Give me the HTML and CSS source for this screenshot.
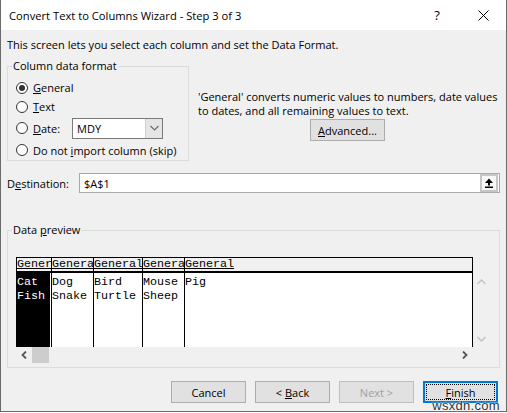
FILE: index.html
```html
<!DOCTYPE html>
<html>
<head>
<meta charset="utf-8">
<link rel="stylesheet" href="styles.css">
</head>
<body>
<div class="window">
  <div class="titlebar">
    <span class="title">Convert Text to Columns Wizard - Step 3 of 3</span>
    <span class="tb-btn help">?</span>
    <span class="tb-btn close"><svg width="11" height="11" viewBox="0 0 11 11"><path d="M0.5 0.5L10.5 10.5M10.5 0.5L0.5 10.5" stroke="#000" stroke-width="1" fill="none"/></svg></span>
  </div>
  <div class="body">
    <p class="intro">This screen lets you select each column and set the Data Format.</p>
    <div class="top">
      <fieldset class="group format">
        <legend>Column data format</legend>
        <div class="radios">
          <div class="radio-row"><span class="radio on"></span><span><u>G</u>eneral</span></div>
          <div class="radio-row"><span class="radio"></span><span><u>T</u>ext</span></div>
          <div class="radio-row date"><span class="radio"></span><span class="date-label"><u>D</u>ate:</span>
            <div class="combo"><span class="combo-val">MDY</span><span class="combo-btn"><svg width="9" height="6" viewBox="0 0 9 6"><path d="M0.5 1L4.5 5L8.5 1" stroke="#6d6d6d" stroke-width="1.2" fill="none"/></svg></span></div>
          </div>
          <div class="radio-row last"><span class="radio"></span><span>Do not <u>i</u>mport column (skip)</span></div>
        </div>
      </fieldset>
      <div class="desc">
        <p class="desc-text">'General' converts numeric values to numbers, date values<br>to dates, and all remaining values to text.</p>
        <button class="btn adv"><span><u>A</u>dvanced...</span></button>
      </div>
    </div>
    <div class="dest">
      <label class="dest-label">D<u>e</u>stination:</label>
      <div class="dest-input"><span class="dest-val">$A$1</span>
        <span class="ref-btn"><svg width="10" height="10" viewBox="0 0 10 10"><path d="M5 0.5L9 5H1Z" fill="#000"/><rect x="4" y="4.5" width="2" height="3" fill="#000"/><rect x="1" y="8.5" width="8" height="1.5" fill="#000"/></svg></span>
      </div>
    </div>
    <fieldset class="group preview">
      <legend>Data <u>p</u>review</legend>
      <div class="preview-inner">
        <div class="table">
          <div class="col c1 sel"><div class="h"><u>Gener</u></div><div class="b">Cat<br>Fish</div></div>
          <div class="col c2"><div class="h"><u>Genera</u></div><div class="b">Dog<br>Snake</div></div>
          <div class="col c3"><div class="h"><u>General</u></div><div class="b">Bird<br>Turtle</div></div>
          <div class="col c4"><div class="h"><u>Genera</u></div><div class="b">Mouse<br>Sheep</div></div>
          <div class="col c5"><div class="h"><u>General</u></div><div class="b">Pig</div></div>
        </div>
        <div class="vscroll">
          <span class="arrow"><svg width="9" height="6" viewBox="0 0 9 6"><path d="M0.5 5L4.5 1L8.5 5" stroke="#c2c2c2" stroke-width="1.5" fill="none"/></svg></span>
          <span class="arrow"><svg width="9" height="6" viewBox="0 0 9 6"><path d="M0.5 1L4.5 5L8.5 1" stroke="#c2c2c2" stroke-width="1.5" fill="none"/></svg></span>
        </div>
        <div class="hscroll">
          <span class="arrow"><svg width="6" height="8" viewBox="0 0 6 8"><path d="M5 0.5L1.5 4L5 7.5" stroke="#555" stroke-width="1.8" fill="none"/></svg></span>
          <span class="thumb"></span>
          <span class="track"></span>
          <span class="arrow"><svg width="6" height="8" viewBox="0 0 6 8"><path d="M1 0.5L4.5 4L1 7.5" stroke="#555" stroke-width="1.8" fill="none"/></svg></span>
        </div>
        <div class="corner"></div>
      </div>
    </fieldset>
    <div class="buttons">
      <button class="btn"><span>Cancel</span></button>
      <button class="btn"><span>&lt; <u>B</u>ack</span></button>
      <button class="btn disabled"><span>Next &gt;</span></button>
      <button class="btn default"><span class="focus"><span><u>F</u>inish</span></span></button>
    </div>
  </div>
  <div class="watermark">wsxdn.com</div>
</div>
</body>
</html>
```
FILE: styles.css
```css
* { box-sizing: border-box; }
html, body { margin: 0; padding: 0; background: #fff; }
body { font-family: "Open Sans", "Noto Sans", sans-serif; font-size: 11px; color: #000; }
u { text-decoration: underline; text-underline-offset: 1px; }

.window {
  width: 507px; height: 412px; position: relative;
  border: 1px solid #6b6b6b; border-top: none;
  background: #f0f0f0; display: flex; flex-direction: column;
}
.titlebar { height: 30px; background: #fff; display: flex; align-items: center; padding-left: 8px; flex: none; }
.title { flex: 1; font-size: 11.2px; }
.tb-btn { width: 46px; height: 30px; display: flex; align-items: center; justify-content: center; }
.help { font-size: 13px; }

.body { padding: 0 6px; display: flex; flex-direction: column; }
.intro { margin: 7px 0 0; line-height: 16px; height: 16px; white-space: nowrap; }

.top { display: flex; align-items: flex-start; margin-top: 5px; }
.group { margin: 0; border: 1px solid #dcdcdc; min-width: 0; }
.group legend { padding: 0 1px; line-height: 16px; height: 16px; }

.format { width: 182px; padding: 0 0 0 4px; height: 103px; }
.radios { padding-left: 4px; margin-top: 4px; }
.radio-row { display: flex; align-items: center; height: 19px; white-space: nowrap; }
.radio-row.date { height: 24px; }
.radio-row.last { height: 20px; }
.radio { width: 12px; height: 12px; border: 1px solid #333; border-radius: 50%; background: #fff; margin-right: 5px; display: flex; align-items: center; justify-content: center; flex: none; }
.radio.on::after { content: ""; width: 6px; height: 6px; border-radius: 50%; background: #333; }
.date-label { width: 39px; }
.combo { width: 91px; height: 21px; border: 1px solid #7a7a7a; background: #fff; display: flex; align-items: stretch; }
.combo-val { flex: 1; padding-left: 4px; display: flex; align-items: center; }
.combo-btn { width: 17px; background: #e5e5e5; border-left: 1px solid #cfcfcf; display: flex; align-items: center; justify-content: center; }

.desc { margin-left: 9px; margin-top: 32px; flex: 1; display: flex; flex-direction: column; }
.desc-text { margin: 0; line-height: 14px; white-space: nowrap; }
.btn {
  font: inherit; color: #000; width: 75px; height: 22px; padding: 0;
  background: #e1e1e1; border: 1px solid #adadad; border-radius: 0;
  display: flex; align-items: center; justify-content: center; white-space: pre;
}
.adv { align-self: center; margin-top: 1px; margin-right: 3px; }

.dest { display: flex; align-items: center; margin-top: 12px; height: 20px; }
.dest-label { width: 72px; flex: none; }
.dest-input { flex: 1; height: 20px; border: 1px solid #a9a9a9; background: #fff; display: flex; align-items: center; padding-left: 4px; }
.dest-val { flex: 1; }
.ref-btn { width: 18px; height: 18px; border: 2px solid #c6c6c6; background: #f8f8f8; display: flex; align-items: center; justify-content: center; margin-right: 1px; }

.preview { margin-top: 29px; padding: 0 0 4px 4px; }
.preview-inner { margin-left: 4px; margin-top: 19px; display: grid; grid-template-columns: 457px 17px; grid-template-rows: 90px 16px; }
.table { display: flex; border: 1px solid #000; border-bottom: none; background: #fff; font-family: "Liberation Mono", monospace; font-size: 11.7px; overflow: hidden; }
.col { display: flex; flex-direction: column; border-left: 1px solid #000; overflow: hidden; white-space: nowrap; flex: none; }
.col .h { height: 15px; line-height: 13px; background: #f0f0f0; border-bottom: 2px solid #000; overflow: hidden; }
.col .b { flex: 1; line-height: 14px; padding-top: 2px; }
.c1 { width: 34px; border-left: none; }
.c2 { width: 42px; }
.c3 { width: 49px; }
.c4 { width: 42px; }
.c5 { flex: 1; }
.sel .b { background: #000; color: #fff; border-right: 1px solid #fff; }

.vscroll { display: flex; flex-direction: column; justify-content: space-between; padding-top: 16px; }
.vscroll .arrow { height: 17px; display: flex; align-items: center; justify-content: center; }
.hscroll { display: flex; align-items: stretch; }
.hscroll .arrow { width: 16px; display: flex; align-items: center; justify-content: center; }
.thumb { width: 17px; background: #cdcdcd; }
.track { flex: 1; }

.buttons { display: flex; justify-content: flex-end; gap: 9px; margin-top: 13px; margin-right: 2px; }
.disabled { color: #a0a0a0; border-color: #bfbfbf; background: #e1e1e1; }
.default { border: 2px solid #0078d7; padding: 1px; }
.focus { width: 100%; height: 100%; border: 1px dotted #000; display: flex; align-items: center; justify-content: center; }

.watermark { position: absolute; right: 6px; bottom: -2px; font-family: "Liberation Sans", sans-serif; font-size: 13px; color: #333; letter-spacing: 0.3px; text-shadow: 0 0 2px #fff, 0 0 2px #fff; }
```
